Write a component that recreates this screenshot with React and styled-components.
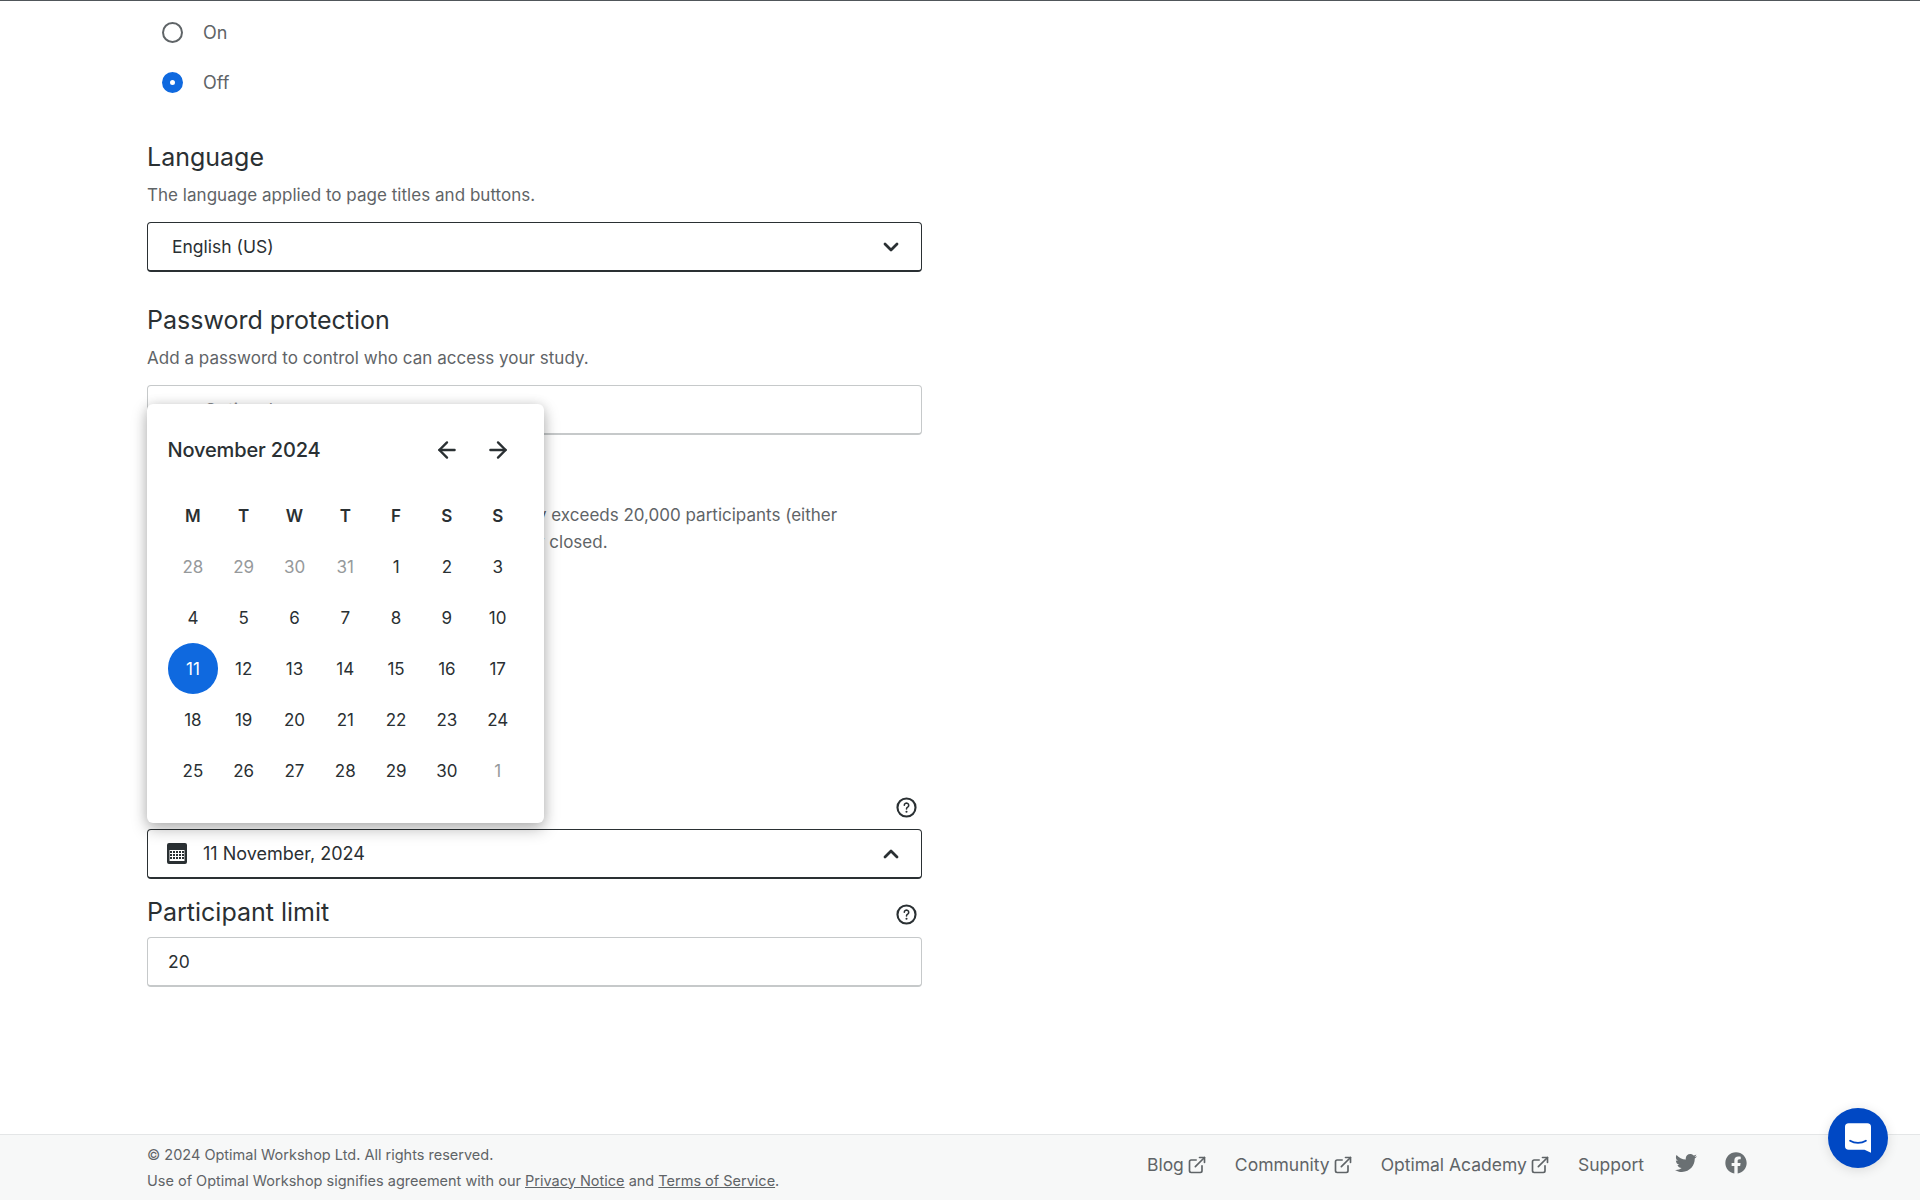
import React from "react";
import styled, { createGlobalStyle } from "styled-components";
import { ChevronDown, ChevronUp, ArrowLeft, ArrowRight, ExternalLink } from "lucide-react";
import { FaTwitter, FaFacebook } from "react-icons/fa";

const weeks = [
  [["28", 1], ["29", 1], ["30", 1], ["31", 1], ["1"], ["2"], ["3"]],
  [["4"], ["5"], ["6"], ["7"], ["8"], ["9"], ["10"]],
  [["11", 0, 1], ["12"], ["13"], ["14"], ["15"], ["16"], ["17"]],
  [["18"], ["19"], ["20"], ["21"], ["22"], ["23"], ["24"]],
  [["25"], ["26"], ["27"], ["28"], ["29"], ["30"], ["1", 1]],
];

const HelpIcon = () => (
  <svg width="21" height="21" viewBox="0 0 20 20" fill="none">
    <circle cx="10" cy="10" r="8.6" stroke="#2a3033" strokeWidth="2" />
    <path d="M7.9 7.9a2.1 2.1 0 1 1 3.2 1.8c-.7.4-1.1.9-1.1 1.7" stroke="#2a3033" strokeWidth="1.5" strokeLinecap="round" />
    <circle cx="10" cy="14" r="1" fill="#2a3033" />
  </svg>
);

const CalendarIcon = () => (
  <svg width="22" height="21" viewBox="0 0 22 21">
    <path fillRule="evenodd" fill="#2a3033" d="M3 0h16a2 2 0 0 1 2 2v17a2 2 0 0 1-2 2H3a2 2 0 0 1-2-2V2a2 2 0 0 1 2-2zm.500 7v11h15V7z" />
    {[5, 8, 11, 14, 17].map((x) =>
      [9, 12, 15].map((y) => <rect key={`${x}-${y}`} x={x - 1} y={y - 1} width="2" height="2" fill="#2a3033" />)
    )}
  </svg>
);

const ChatIcon = () => (
  <svg width="26" height="30" viewBox="0 0 28 32">
    <path fill="#fff" d="M4 0h20a4 4 0 0 1 4 4v28l-7-3.400H4a4 4 0 0 1-4-4V4a4 4 0 0 1 4-4z" />
    <path d="M5.500 19c5 3 12 3 17 0" fill="none" stroke="#0048c4" strokeWidth="2" strokeLinecap="round" />
  </svg>
);

const App = () => {
  return (
    <Page>
      <GlobalStyle />
      <Main>
        <RadioRow>
          <Radio />
          <RadioLabel>On</RadioLabel>
        </RadioRow>
        <RadioRow>
          <Radio $checked />
          <RadioLabel>Off</RadioLabel>
        </RadioRow>

        <Heading $top={37}>Language</Heading>
        <Sub>The language applied to page titles and buttons.</Sub>
        <Select>
          <span>English (US)</span>
          <ChevronDown size={24} strokeWidth={2.8} />
        </Select>

        <Heading $top={32}>Password protection</Heading>
        <Sub>Add a password to control who can access your study.</Sub>
        <Input $indent={56} $muted>
          Optional
        </Input>

        <Note>
          y exceeds 20,000 participants (either
          <br />y closed.
        </Note>

        <HelpRow>
          <HelpIcon />
        </HelpRow>
        <DateField>
          <DateValue>
            <CalendarIcon />
            <span>11 November, 2024</span>
          </DateValue>
          <ChevronUp size={24} strokeWidth={2.8} />

          <Popup>
            <PopupHead>
              <Month>November 2024</Month>
              <NavBtn>
                <ArrowLeft size={26} strokeWidth={2.2} />
              </NavBtn>
              <NavBtn>
                <ArrowRight size={26} strokeWidth={2.2} />
              </NavBtn>
            </PopupHead>
            <Days>
              {["M", "T", "W", "T", "F", "S", "S"].map((d, i) => (
                <DayName key={i}>{d}</DayName>
              ))}
              {weeks.flat().map(([n, muted, selected], i) => (
                <Day key={i} $muted={muted} $selected={selected}>
                  {n}
                </Day>
              ))}
            </Days>
          </Popup>
        </DateField>

        <LimitRow>
          <Heading as="div">Participant limit</Heading>
          <LimitHelp>
            <HelpIcon />
          </LimitHelp>
        </LimitRow>
        <Input>20</Input>
      </Main>

      <Footer>
        <Legal>
          <div>© 2024 Optimal Workshop Ltd. All rights reserved.</div>
          <div>
            Use of Optimal Workshop signifies agreement with our <u>Privacy Notice</u> and <u>Terms of Service</u>.
          </div>
        </Legal>
        <FooterLinks>
          <FooterLink>
            Blog
            <ExternalLink size={20} strokeWidth={2} />
          </FooterLink>
          <FooterLink>
            Community
            <ExternalLink size={20} strokeWidth={2} />
          </FooterLink>
          <FooterLink>
            Optimal Academy
            <ExternalLink size={20} strokeWidth={2} />
          </FooterLink>
          <FooterLink>Support</FooterLink>
          <Social>
            <FaTwitter size={22} />
          </Social>
          <Social>
            <FaFacebook size={22} />
          </Social>
        </FooterLinks>
      </Footer>

      <ChatButton>
        <ChatIcon />
      </ChatButton>
    </Page>
  );
};

const GlobalStyle = createGlobalStyle`
  html, body {
    margin: 0;
    height: 100%;
    background: #fff;
    overflow: hidden;
  }
  body {
    font-family: Inter, "Liberation Sans", sans-serif;
    color: #2a3033;
  }
`;

const Page = styled.div`
  position: relative;
  height: 1200px;
  display: flex;
  flex-direction: column;
  border-top: 1px solid #50565a;
  box-sizing: border-box;
`;

const Main = styled.main`
  flex: 1;
  width: 775px;
  margin-left: 147px;
  padding-top: 3px;
`;

const RadioRow = styled.div`
  display: flex;
  align-items: center;
  height: 50px;
  padding: 7px 0 0 15px;
  box-sizing: border-box;
`;

const Radio = styled.span`
  width: 21px;
  height: 21px;
  border-radius: 50%;
  box-sizing: border-box;
  border: ${(p) => (p.$checked ? "8px solid #0f69df" : "2.5px solid #5f6467")};
  background: #fff;
`;

const RadioLabel = styled.span`
  margin-left: 20px;
  font-size: 18px;
  color: #5f6467;
`;

const Heading = styled.div`
  margin-top: ${(p) => p.$top || 0}px;
  font-size: 25px;
  line-height: 32px;
  color: #2a3033;
`;

const Sub = styled.div`
  margin-top: 10px;
  font-size: 17px;
  letter-spacing: 0.03px;
  line-height: 24px;
  color: #5f6467;
`;

const Select = styled.div`
  margin-top: 15px;
  height: 50px;
  box-sizing: border-box;
  border: 1px solid #2a3033;
  border-bottom-width: 2px;
  border-radius: 4px;
  padding: 0 18px 0 24px;
  display: flex;
  align-items: center;
  justify-content: space-between;
  font-size: 17.500px;
`;

const Input = styled.div`
  margin-top: ${(p) => (p.$indent ? 15 : 0)}px;
  height: 50px;
  box-sizing: border-box;
  border: 1px solid #c6c9ca;
  border-bottom-width: 2px;
  border-radius: 4px;
  padding-left: ${(p) => p.$indent || 20}px;
  display: flex;
  align-items: center;
  font-size: 17.500px;
  color: ${(p) => (p.$muted ? "#8a8d90" : "#2a3033")};
`;

const Note = styled.div`
  margin-top: 67px;
  padding-left: 388px;
  text-indent: 2px;
  font-size: 17px;
  line-height: 27px;
  color: #5f6467;
`;

const HelpRow = styled.div`
  height: 24px;
  margin-top: 239px;
  padding-right: 5px;
  display: flex;
  justify-content: flex-end;
  align-items: center;
`;

const DateField = styled(Select)`
  position: relative;
  margin-top: 10px;
  padding-left: 18px;
`;

const DateValue = styled.div`
  display: flex;
  align-items: center;
  gap: 15px;
  font-size: 18px;
`;

const Popup = styled.div`
  position: absolute;
  left: -1px;
  bottom: 54px;
  width: 397px;
  height: 419px;
  box-sizing: border-box;
  padding: 20px 20px 20px 20.500px;
  background: #fff;
  border-radius: 6px;
  box-shadow: 0 6px 16px rgba(0, 0, 0, 0.28), 0 0 12px rgba(0, 0, 0, 0.1);
`;

const PopupHead = styled.div`
  display: flex;
  align-items: center;
  height: 51px;
  margin-bottom: 15px;
`;

const Month = styled.div`
  flex: 1;
  font-size: 20px;
  font-weight: 500;
  letter-spacing: -0.15px;
`;

const NavBtn = styled.div`
  width: 50.800px;
  margin-right: 0.500px;
  display: flex;
  justify-content: center;
`;

const Days = styled.div`
  display: grid;
  grid-template-columns: repeat(7, 50.800px);
  grid-auto-rows: 51px;
`;

const DayName = styled.div`
  display: flex;
  align-items: center;
  justify-content: center;
  font-size: 17px;
  font-weight: 600;
`;

const Day = styled.div`
  display: flex;
  align-items: center;
  justify-content: center;
  font-size: 17px;
  border-radius: 50%;
  color: ${(p) => (p.$selected ? "#fff" : p.$muted ? "#96999b" : "#2a3033")};
  background: ${(p) => (p.$selected ? "#0f69df" : "transparent")};
`;

const LimitRow = styled.div`
  display: flex;
  align-items: center;
  justify-content: space-between;
  height: 32px;
  margin-top: 17px;
  margin-bottom: 9px;
  padding-right: 5px;
`;

const LimitHelp = styled.span`
  display: flex;
  padding-top: 5px;
`;

const Footer = styled.footer`
  height: 66px;
  box-sizing: border-box;
  border-top: 1px solid #e4e6e7;
  background: #f7f8f8;
  padding: 0 173px 0 147px;
  display: flex;
  align-items: center;
  justify-content: space-between;
`;

const Legal = styled.div`
  font-size: 14.500px;
  line-height: 26px;
  color: #5f6467;
`;

const FooterLinks = styled.div`
  display: flex;
  align-items: center;
  gap: 28px;
  margin-bottom: 6px;
`;

const FooterLink = styled.div`
  display: flex;
  align-items: center;
  gap: 3px;
  font-size: 17.500px;
  color: #5f6467;
  &:nth-child(4) {
    margin-right: 3px;
  }
`;

const Social = styled.div`
  display: flex;
  color: #6a7073;
  margin-bottom: 4px;
`;

const ChatButton = styled.div`
  position: absolute;
  right: 32px;
  bottom: 32px;
  width: 60px;
  height: 60px;
  border-radius: 50%;
  background: #0048c4;
  display: flex;
  align-items: center;
  justify-content: center;
  box-shadow: 0 2px 12px rgba(0, 0, 0, 0.12);
`;

export default App;
